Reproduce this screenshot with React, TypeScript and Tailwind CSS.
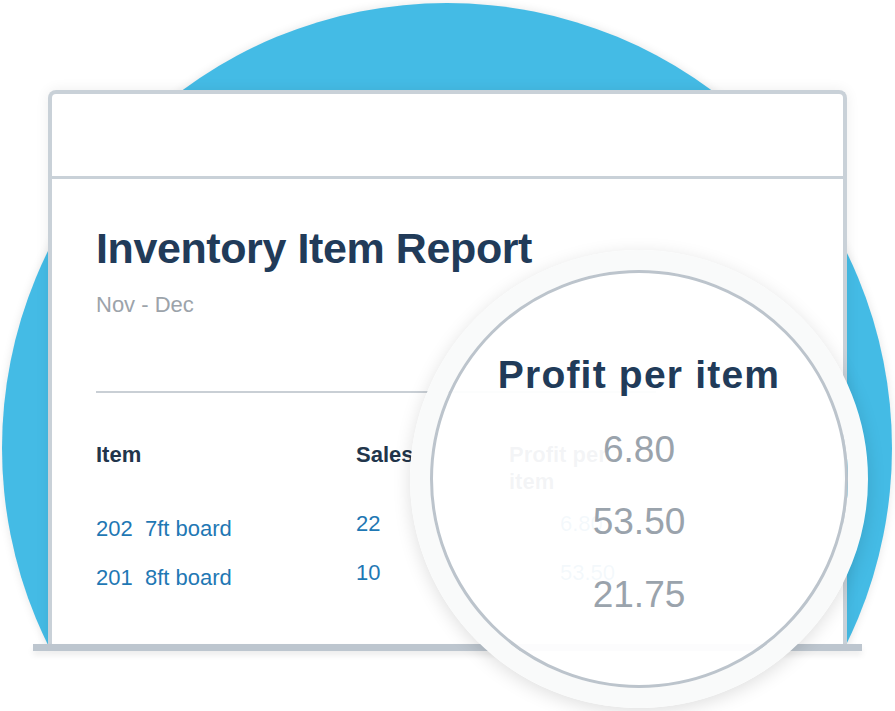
import React from 'react';

const rows = [
  { code: '202', name: '7ft board', sales: '22', profit: '6.80' },
  { code: '201', name: '8ft board', sales: '10', profit: '53.50' },
];

const Magnifier = () => {
  return (
    <div className="absolute left-[410px] top-[250px] z-20 w-[458px] h-[458px] rounded-full border-[20px] border-[#f9fafa] shadow-[0_4px_18px_rgba(0,0,0,0.13)]">
      <div className="w-full h-full rounded-full border-[3px] border-[#bcc4cc] bg-white/[0.95] flex flex-col items-center pt-[82px]">
        <div className="text-[39px] leading-none font-bold tracking-[1.2px] text-[#213b59]">Profit per item</div>
        <div className="mt-[37px] text-[37px] leading-none text-[#9aa3ac]">6.80</div>
        <div className="mt-[35px] text-[37px] leading-none text-[#9aa3ac]">53.50</div>
        <div className="mt-[36px] text-[37px] leading-none text-[#9aa3ac]">21.75</div>
      </div>
    </div>
  );
};

const ReportCard = () => {
  return (
    <div className="ml-[48px] w-[799px] h-[554px] bg-white border-4 border-b-0 border-[#c9d1d8] rounded-t-lg shadow-[0_0_14px_rgba(0,0,0,0.07)] flex flex-col">
      <div className="h-[85px] border-b-[3px] border-[#c9d1d8]" />
      <div className="pl-[44px] pt-[48px] flex flex-col">
        <h1 className="text-[43px] leading-none font-bold tracking-[-0.4px] text-[#213b59]">Inventory Item Report</h1>
        <div className="mt-[24px] text-[22px] leading-none text-[#9ca3aa]">Nov - Dec</div>
        <div className="mt-[75px] h-[2px] w-[560px] bg-[#c9cfd5]" />

        <div className="mt-[48px] grid grid-cols-[260px_153px_120px] text-[22px]">
          <div className="leading-[27px] font-bold text-[#22354b]">Item</div>
          <div className="leading-[27px] font-bold text-[#22354b]">Sales</div>
          <div className="leading-[27px] font-bold text-[#22354b]">Profit per item</div>

          {rows.map((r, i) => (
            <React.Fragment key={r.code}>
              <div className={`leading-[44px] text-[#1f78b4] whitespace-pre ${i === 0 ? 'mt-[7px] pt-[5px]' : 'pt-[5px]'}`}>
                {r.code}  {r.name}
              </div>
              <div className={`leading-[44px] text-[#1f78b4] ${i === 0 ? 'mt-[7px]' : ''}`}>{r.sales}</div>
              <div className={`leading-[44px] text-[#1f78b4] pl-[51px] ${i === 0 ? 'mt-[7px]' : ''}`}>{r.profit}</div>
            </React.Fragment>
          ))}
        </div>
      </div>
    </div>
  );
};

const App = () => {
  return (
    <div className="relative w-[895px] h-[711px] overflow-hidden bg-white font-['Liberation_Sans',Arial,sans-serif]">
      {/* blue backdrop, cut off where the card meets its base */}
      <div className="absolute left-0 top-0 w-full h-[646px] overflow-hidden">
        <div className="absolute left-[2px] top-[3px] w-[890px] h-[890px] rounded-full bg-[#44bbe5] shadow-[0_0_10px_rgba(0,0,0,0.1)]" />
      </div>

      <div className="relative z-10 pt-[90px] flex flex-col">
        <ReportCard />
        <div className="ml-[33px] w-[829px] h-[7px] bg-[#bdc6cf] shadow-[0_4px_6px_rgba(0,0,0,0.08)]" />
      </div>

      <Magnifier />
    </div>
  );
};

export default App;
